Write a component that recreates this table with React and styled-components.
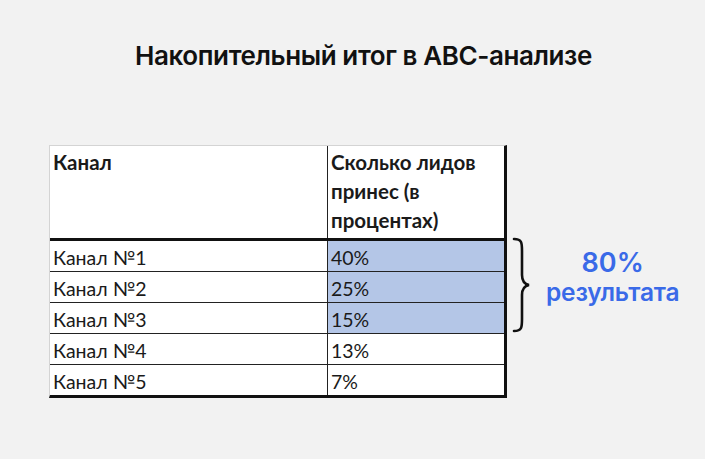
import React from "react";
import styled, { createGlobalStyle } from "styled-components";

const Global = createGlobalStyle`
  html, body { margin: 0; padding: 0; background: #f2f2f2; }
  body { font-family: Inter, "Noto Sans", sans-serif; }
`;

const Page = styled.div`
  width: 705px;
  height: 459px;
  background: #f2f2f2;
  box-sizing: border-box;
  padding-top: 40px;
`;

const Title = styled.h1`
  margin: 0;
  padding-left: 22px;
  text-align: center;
  font-family: Inter, "Noto Sans", sans-serif;
  font-weight: 600;
  font-size: 26px;
  line-height: 32px;
  color: #111;
  letter-spacing: -0.4px;
`;

const Main = styled.div`
  display: flex;
  align-items: flex-start;
  padding-left: 49px;
  margin-top: 73px;
`;

const Table = styled.div`
  width: 458px;
  box-sizing: border-box;
  border-top: 1px solid #d4d4d4;
  border-left: 1px solid #d4d4d4;
  border-right: 3px solid #111;
  border-bottom: 3px solid #111;
  background: #fff;
  font-family: Lato, "Liberation Sans", sans-serif;
  color: #1a1a1a;
`;

const Row = styled.div`
  display: grid;
  grid-template-columns: 277px 1fr;
  height: ${(p) => (p.$header ? "92px" : "30px")};
  border-bottom: ${(p) => (p.$header ? "3px solid #111" : p.$last ? "none" : "1px solid #222")};
`;

const Cell = styled.div`
  padding: ${(p) => (p.$header ? "2px 4px 0 3px" : "4px 4px 0 3px")};
  font-size: ${(p) => (p.$header ? "20.5px" : "19.5px")};
  line-height: ${(p) => (p.$header ? "29px" : "25px")};
  font-weight: ${(p) => (p.$header ? 700 : 400)};
  background: ${(p) => (p.$hl ? "#b4c6e7" : "transparent")};
  border-left: ${(p) => (p.$divider ? "1px solid #222" : "none")};
  white-space: pre-line;
`;

const Brace = styled.svg`
  margin-left: 5px;
  margin-top: 92px;
  flex: none;
`;

const Note = styled.div`
  margin-left: 14px;
  margin-top: 103px;
  text-align: center;
  color: #3a6ae8;
  font-family: Inter, "Noto Sans", sans-serif;
  font-weight: 600;
`;

const Big = styled.div`
  font-size: 27px;
  line-height: 30px;
`;

const Small = styled.div`
  font-size: 24.5px;
  line-height: 28px;
  letter-spacing: -0.2px;
`;

const rows = [
  ["Канал №1", "40%", true],
  ["Канал №2", "25%", true],
  ["Канал №3", "15%", true],
  ["Канал №4", "13%", false],
  ["Канал №5", "7%", false],
];

export default function App() {
  return (
    <Page>
      <Global />
      <Title>Накопительный итог в АВС-анализе</Title>
      <Main>
        <Table>
          <Row $header>
            <Cell $header>Канал</Cell>
            <Cell $header $divider>{"Сколько лидов\nпринес (в\nпроцентах)"}</Cell>
          </Row>
          {rows.map(([a, b, hl], i) => (
            <Row key={a} $last={i === rows.length - 1}>
              <Cell>{a}</Cell>
              <Cell $divider $hl={hl}>{b}</Cell>
            </Row>
          ))}
        </Table>
        <Brace width="20" height="96" viewBox="0 0 20 96">
          <path
            d="M2 2 C10 2 10 6 10 14 L10 38 C10 44 12 47 17 48 C12 49 10 52 10 58 L10 82 C10 90 10 94 2 94"
            fill="none"
            stroke="#111"
            strokeWidth="2.6"
            strokeLinecap="round"
          />
        </Brace>
        <Note>
          <Big>80%</Big>
          <Small>результата</Small>
        </Note>
      </Main>
    </Page>
  );
}
